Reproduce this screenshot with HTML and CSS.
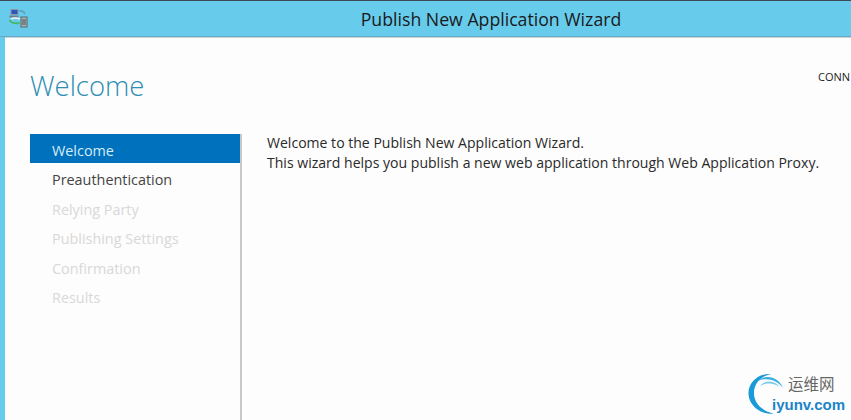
FILE: index.html
```html
<!DOCTYPE html>
<html lang="en">
<head>
<meta charset="utf-8">
<title>Publish New Application Wizard</title>
<link rel="stylesheet" href="styles.css">
</head>
<body>
<div class="window">
  <header class="titlebar">
    <svg class="app-icon" width="20" height="20" viewBox="0 0 20 20" aria-hidden="true">
      <rect x="3" y="1.500" width="7" height="5" fill="#2f55b8" stroke="#8a9aa8" stroke-width="1"/>
      <rect x="1.500" y="7.500" width="9" height="2" fill="#6e7f8c"/>
      <path d="M11 3c3-.5 5 .5 6 3" fill="none" stroke="#5f9fc0" stroke-width="1.500"/>
      <path d="M1.500 12c2 3 5 4 10 3" fill="none" stroke="#49b86a" stroke-width="2"/>
      <path d="M3 11c3-1.500 5-1.500 9 0" fill="none" stroke="#eef4f6" stroke-width="1.500"/>
      <rect x="13" y="9" width="6" height="10" fill="#a9b2b4" stroke="#5c6668" stroke-width="1"/>
      <path d="M14 12h4M14 14h4M14 16h4" stroke="#4a5254" stroke-width="1"/>
    </svg>
    <h1 class="window-title">Publish New Application Wizard</h1>
  </header>
  <main class="body">
    <div class="top-row">
      <h2 class="page-title">Welcome</h2>
      <span class="status">CONN</span>
    </div>
    <div class="columns">
      <nav class="steps">
        <div class="step current">Welcome</div>
        <div class="step active">Preauthentication</div>
        <div class="step">Relying Party</div>
        <div class="step">Publishing Settings</div>
        <div class="step">Confirmation</div>
        <div class="step">Results</div>
      </nav>
      <section class="content">
        <p class="line">Welcome to the Publish New Application Wizard.</p>
        <p class="line">This wizard helps you publish a new web application through Web Application Proxy.</p>
      </section>
    </div>
  </main>
  <div class="watermark">
    <svg class="mark" width="40" height="44" viewBox="0 0 40 44" aria-hidden="true">
      <path d="M26 40.500C13 42 1 33 0.500 21 0 9 11 0 23 1 13 3 5.500 11 6 21 6.500 31 15 38.500 26 40.500Z" fill="#1b9ad8"/>
      <path d="M35 15C31 5 19 0 10 8 19 4 29 7 35 15Z" fill="#3aaee2"/>
      <path d="M32 14C27 8 18 6 12 13 19 9 26 10 32 14Z" fill="#7cc9ec"/>
    </svg>
    <span class="wm-cn">运维网</span>
    <span class="wm-en">iyunv.com</span>
  </div>
</div>
</body>
</html>
```
FILE: styles.css
```css
html, body {
  margin: 0;
  height: 100%;
  overflow: hidden;
}
body {
  font-family: "Open Sans", "Noto Sans", sans-serif;
  background: #67cbec;
}
.window {
  position: relative;
  width: 851px;
  height: 420px;
  display: flex;
  flex-direction: column;
  overflow: hidden;
  border-top: 1px solid #3c4a55;
  box-sizing: border-box;
  background: #67cbec;
}
.titlebar {
  position: relative;
  height: 36px;
  flex: none;
  display: flex;
  align-items: center;
  justify-content: center;
  padding-left: 131px;
  border-bottom: 1px solid #66a9c9;
  box-sizing: border-box;
}
.app-icon {
  position: absolute;
  left: 8px;
  top: 7px;
}
.window-title {
  margin: 0;
  font-size: 17.7px;
  font-weight: 400;
  color: #1a1a1a;
}
.body {
  flex: 1;
  margin-left: 5px;
  padding-left: 25px;
  background: #fdfdfd;
  border-top: 1px solid #c9d3d9;
  display: flex;
  flex-direction: column;
  min-height: 0;
}
.top-row {
  height: 96px;
  flex: none;
  display: flex;
  justify-content: space-between;
  white-space: nowrap;
}
.page-title {
  margin: 29px 0 0;
  font-size: 27.5px;
  line-height: 38px;
  font-weight: 300;
  color: #2f8eb4;
}
.status {
  position: absolute;
  left: 818px;
  top: 68px;
  font-size: 11px;
  line-height: 15px;
  color: #222;
}
.columns {
  flex: 1;
  display: flex;
  min-height: 0;
}
.steps {
  width: 210px;
  flex: none;
  border-right: 2px solid #c8c8c8;
}
.step {
  height: 29.4px;
  box-sizing: border-box;
  padding: 3px 0 0 22px;
  line-height: 27px;
  font-size: 14.4px;
  color: #d8d8d8;
}
.step.current {
  background: #0071bc;
  color: #d6ecf8;
}
.step.active {
  color: #444;
}
.content {
  padding-left: 25px;
  flex: 1;
  white-space: nowrap;
}
.line {
  margin: 0;
  font-size: 14.05px;
  line-height: 20px;
  color: #2a2a2a;
}
.line:first-child {
  margin-top: -1px;
}
.watermark {
  position: absolute;
  left: 748px;
  top: 372px;
  width: 103px;
  height: 48px;
}
.mark {
  position: absolute;
  left: 0;
  top: 0;
}
.wm-cn {
  position: absolute;
  left: 40px;
  top: 0;
  font-family: "Noto Sans CJK SC", sans-serif;
  font-size: 15.5px;
  line-height: 20px;
  color: #666;
}
.wm-en {
  position: absolute;
  left: 24px;
  top: 23px;
  font-family: "Liberation Sans", sans-serif;
  font-size: 15px;
  line-height: 18px;
  font-weight: 700;
  color: #1b84c8;
}
```
